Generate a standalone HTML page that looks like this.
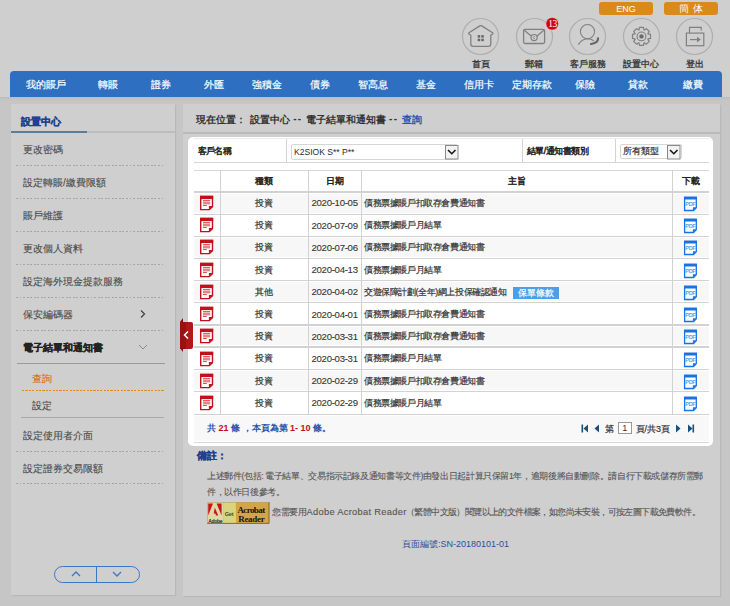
<!DOCTYPE html>
<html><head><meta charset="utf-8">
<style>
*{margin:0;padding:0;box-sizing:border-box}
html,body{width:730px;height:606px;overflow:hidden}
body{background:#c6c6c6;font-family:"Liberation Sans",sans-serif;position:relative;color:#444}
.a{position:absolute;white-space:nowrap}
.lang{top:2px;height:13px;width:54px;background:#d98a1a;border-radius:3px;color:#fff;font-size:9px;line-height:14px;text-align:center}
.ilab{top:57.5px;font-size:9px;-webkit-text-stroke-width:0.3px;color:#333;width:60px;text-align:center}
.ni{top:71px;height:26px;line-height:27px;color:#fff;-webkit-text-stroke-width:0.2px;font-size:10.2px;width:80px;text-align:center}
.si{left:23px;font-size:10px;color:#4a4a4a;-webkit-text-stroke-width:0.12px}
.dash{left:16px;width:148px;height:1px;background:repeating-linear-gradient(90deg,#a4a4a4 0 1.9px,transparent 1.9px 3.55px)}
.hl{left:194px;width:515px;height:1.5px;background:#dcdcdc}
.vl{width:1.5px;background:#dcdcdc}
.tt{font-size:8.8px;color:#333;-webkit-text-stroke-width:0.2px}
.th{font-size:8.8px;color:#222;-webkit-text-stroke-width:0.45px}
</style></head><body>
<div class="a" style="left:0;top:0;width:730px;height:97px;background:#cfcfcf"></div>
<div class="a lang" style="left:599px">ENG</div>
<div class="a lang" style="left:664px;letter-spacing:4px;text-indent:4px;font-size:9.5px;line-height:14px">簡体</div>
<svg class="a" style="left:461.0px;top:16.5px" width="39" height="39" viewBox="0 0 39 39"><circle cx="19.5" cy="19.5" r="18" fill="none" stroke="#aeaeae" stroke-width="1.2"/></svg>
<div class="a ilab" style="left:450.5px">首頁</div>
<svg class="a" style="left:514.5px;top:16.5px" width="39" height="39" viewBox="0 0 39 39"><circle cx="19.5" cy="19.5" r="18" fill="none" stroke="#aeaeae" stroke-width="1.2"/></svg>
<div class="a ilab" style="left:504px">郵箱</div>
<svg class="a" style="left:568.1px;top:16.5px" width="39" height="39" viewBox="0 0 39 39"><circle cx="19.5" cy="19.5" r="18" fill="none" stroke="#aeaeae" stroke-width="1.2"/></svg>
<div class="a ilab" style="left:557.6px">客戶服務</div>
<svg class="a" style="left:621.8px;top:16.5px" width="39" height="39" viewBox="0 0 39 39"><circle cx="19.5" cy="19.5" r="18" fill="none" stroke="#aeaeae" stroke-width="1.2"/></svg>
<div class="a ilab" style="left:611.3px">設置中心</div>
<svg class="a" style="left:675.3px;top:16.5px" width="39" height="39" viewBox="0 0 39 39"><circle cx="19.5" cy="19.5" r="18" fill="none" stroke="#aeaeae" stroke-width="1.2"/></svg>
<div class="a ilab" style="left:664.8px">登出</div>
<svg class="a" style="left:460px;top:16px" width="42" height="42" viewBox="460 16 42 42">
<path d="M470.8 35.3 L468.9 33.9 Q468.3 33.3 469 32.8 L479.8 25.9 Q480.8 25.3 481.8 25.9 L492.6 32.8 Q493.3 33.3 492.7 33.9 L490.8 35.3 V44 Q490.8 46.3 488.5 46.3 H473.1 Q470.8 46.3 470.8 44 Z" fill="none" stroke="#808080" stroke-width="1.3" stroke-linejoin="round"/>
<rect x="477.7" y="35.1" width="2.5" height="2.5" fill="#666"/><rect x="481.3" y="35.1" width="2.5" height="2.5" fill="#666"/>
<rect x="477.7" y="38.7" width="2.5" height="2.5" fill="#666"/><rect x="481.3" y="38.7" width="2.5" height="2.5" fill="#666"/>
</svg>
<svg class="a" style="left:513px;top:14px" width="46" height="44" viewBox="513 14 46 44">
<rect x="523.6" y="29.3" width="21" height="14.2" rx="1.5" fill="none" stroke="#808080" stroke-width="1.3"/>
<path d="M524 30 L531.5 36.3 M544.2 30 L536.7 36.3" fill="none" stroke="#808080" stroke-width="1.2"/>
<circle cx="534.1" cy="37.6" r="3.1" fill="none" stroke="#808080" stroke-width="1.2"/>
<path d="M535 36.6 Q533.4 36.2 533.3 37.7 Q533.5 39 535 38.6" fill="none" stroke="#808080" stroke-width="0.7"/>
<circle cx="552.2" cy="23.8" r="6.3" fill="#d20010" stroke="#d8e4e4" stroke-width="0.5"/>
<text x="552.4" y="27.2" font-size="9.6" text-anchor="middle" fill="#fff" font-family="Liberation Serif" letter-spacing="-0.6">13</text>
</svg>
<svg class="a" style="left:566px;top:16px" width="42" height="42" viewBox="566 16 42 42">
<circle cx="587.5" cy="31.6" r="7.1" fill="none" stroke="#808080" stroke-width="1.1"/>
<path d="M578.3 44.6 Q582 39 587.5 38.8 Q591.3 38.8 593.8 40.8" fill="none" stroke="#808080" stroke-width="1.1"/>
<path d="M598 38.3 Q598.8 42.5 591 44" fill="none" stroke="#666" stroke-width="2.2" stroke-linecap="round"/>
</svg>
<svg class="a" style="left:620px;top:16px" width="42" height="42" viewBox="620 16 42 42">
<path d="M639.03 29.85 L639.49 27.42 L643.51 27.42 L643.97 29.85 L644.39 30.02 L646.43 28.63 L649.27 31.47 L647.88 33.51 L648.05 33.93 L650.48 34.39 L650.48 38.41 L648.05 38.87 L647.88 39.29 L649.27 41.33 L646.43 44.17 L644.39 42.78 L643.97 42.95 L643.51 45.38 L639.49 45.38 L639.03 42.95 L638.61 42.78 L636.57 44.17 L633.73 41.33 L635.12 39.29 L634.95 38.87 L632.52 38.41 L632.52 34.39 L634.95 33.93 L635.12 33.51 L633.73 31.47 L636.57 28.63 L638.61 30.02Z" fill="none" stroke="#808080" stroke-width="1.2" stroke-linejoin="round"/>
<circle cx="641.5" cy="36.4" r="4.4" fill="none" stroke="#808080" stroke-width="1.1"/>
<circle cx="641.5" cy="36.4" r="2.2" fill="#6a6a6a"/>
</svg>
<svg class="a" style="left:673px;top:16px" width="42" height="42" viewBox="673 16 42 42">
<path d="M689.5 33 V27.3 H701.2 V30.5" fill="none" stroke="#808080" stroke-width="1.2"/>
<rect x="686.4" y="33.1" width="17.4" height="12.6" fill="none" stroke="#808080" stroke-width="1.2"/>
<path d="M690 39.6 H697.5" stroke="#808080" stroke-width="1.2"/>
<path d="M697 36.8 L700.8 39.6 L697 42.4Z" fill="#808080"/>
</svg>
<div class="a" style="left:10px;top:71px;width:712px;height:26px;background:#2e6fc2;border-radius:4px 4px 0 0"></div>
<div class="a ni" style="left:5.600000000000001px">我的賬戶</div>
<div class="a ni" style="left:68px">轉賬</div>
<div class="a ni" style="left:121px">證券</div>
<div class="a ni" style="left:173.6px">外匯</div>
<div class="a ni" style="left:226.8px">強積金</div>
<div class="a ni" style="left:280px">債券</div>
<div class="a ni" style="left:332.8px">智高息</div>
<div class="a ni" style="left:386px">基金</div>
<div class="a ni" style="left:438.9px">信用卡</div>
<div class="a ni" style="left:491.70000000000005px">定期存款</div>
<div class="a ni" style="left:544.5px">保險</div>
<div class="a ni" style="left:597.7px">貸款</div>
<div class="a ni" style="left:653px">繳費</div>
<div class="a" style="left:0;top:97px;width:730px;height:4px;background:linear-gradient(#bdbdbd,#c6c6c6)"></div>
<div class="a" style="left:11px;top:104px;width:164px;height:490.5px;background:#cfcfcf;box-shadow:1px 1px 1px rgba(0,0,0,0.07)"></div>
<div class="a" style="left:183px;top:104px;width:537px;height:491.5px;background:#cfcfcf;box-shadow:1px 1px 1px rgba(0,0,0,0.07)"></div>
<div class="a" style="left:11px;top:131.3px;width:164px;height:2px;background:#bdbdbd"></div>
<div class="a" style="left:11px;top:131.3px;width:76px;height:2px;background:#5b7d97"></div>
<div class="a" style="left:20.5px;top:114.5px;font-size:10.3px;font-weight:bold;-webkit-text-stroke-width:0.25px;color:#1f3f8f">設置中心</div>
<div class="a si" style="top:142.5px">更改密碼</div>
<div class="a dash" style="top:165px"></div>
<div class="a si" style="top:175.5px">設定轉賬/繳費限額</div>
<div class="a dash" style="top:198px"></div>
<div class="a si" style="top:208.5px">賬戶維護</div>
<div class="a dash" style="top:230.5px"></div>
<div class="a si" style="top:241.5px">更改個人資料</div>
<div class="a dash" style="top:263.5px"></div>
<div class="a si" style="top:274.5px">設定海外現金提款服務</div>
<div class="a dash" style="top:297px"></div>
<div class="a si" style="top:307.5px">保安編碼器</div>
<div class="a dash" style="top:329.5px"></div>
<div class="a si" style="top:341px;font-weight:bold;color:#222;-webkit-text-stroke-width:0.2px">電子結單和通知書</div>
<div class="a" style="left:16.5px;top:363px;width:148px;height:1px;background:#9a9a9a"></div>
<div class="a si" style="left:32px;top:372px;color:#d8690f">查詢</div>
<div class="a" style="left:21.5px;top:389.5px;width:142px;height:1.5px;background:repeating-linear-gradient(90deg,#de8a22 0 2.1px,transparent 2.1px 3.4px)"></div>
<div class="a si" style="left:32px;top:399.3px">設定</div>
<div class="a" style="left:20.5px;top:417px;width:143px;height:1px;background:#aaa"></div>
<div class="a si" style="top:428.6px">設定使用者介面</div>
<div class="a dash" style="top:450.6px"></div>
<div class="a si" style="top:461.6px">設定證券交易限額</div>
<div class="a dash" style="top:483.4px"></div>
<svg class="a" style="left:138px;top:308px" width="10" height="12" viewBox="0 0 10 12"><path d="M3 2.5 L6.5 6 L3 9.5" fill="none" stroke="#444" stroke-width="1.3"/></svg>
<svg class="a" style="left:137px;top:342px" width="12" height="10" viewBox="0 0 12 10"><path d="M2 3 L6 7 L10 3" fill="none" stroke="#888" stroke-width="1"/></svg>
<div class="a" style="left:53.5px;top:566px;width:86px;height:16.5px;border:1.2px solid #3b78c2;border-radius:9px"></div>
<div class="a" style="left:96px;top:566px;width:1.2px;height:16.5px;background:#3b78c2"></div>
<svg class="a" style="left:68px;top:569px" width="16" height="10" viewBox="0 0 16 10"><path d="M4 7 L8 3 L12 7" fill="none" stroke="#3b78c2" stroke-width="1.3"/></svg>
<svg class="a" style="left:109px;top:569px" width="16" height="10" viewBox="0 0 16 10"><path d="M4 3 L8 7 L12 3" fill="none" stroke="#3b78c2" stroke-width="1.3"/></svg>
<div class="a" style="left:183px;top:131.5px;width:537px;height:2px;background:#bababa"></div>
<div class="a" style="left:195.8px;top:112.6px;font-size:10px;font-weight:bold;color:#333">現在位置：</div>
<div class="a" style="left:249.5px;top:112.6px;font-size:10px;font-weight:bold;color:#333">設置中心</div>
<div class="a" style="left:293.2px;top:112.6px;font-size:10px;font-weight:bold;color:#333;letter-spacing:1.3px">--</div>
<div class="a" style="left:306.1px;top:112.6px;font-size:10px;font-weight:bold;color:#333">電子結單和通知書</div>
<div class="a" style="left:389.1px;top:112.6px;font-size:10px;font-weight:bold;color:#333;letter-spacing:1.3px">--</div>
<div class="a" style="left:402px;top:112.6px;font-size:10px;font-weight:bold;color:#1f55b5">查詢</div>
<div class="a" style="left:188px;top:136.5px;width:524.5px;height:309.5px;background:#fff;border-radius:5px"></div>
<div class="a hl" style="top:138px;height:1px;background:#ececec"></div>
<div class="a hl" style="top:162px;height:1px;background:#d6d6d6"></div>
<div class="a vl" style="left:286px;top:139px;height:23px;width:1px;background:#d4d4d4"></div>
<div class="a vl" style="left:522px;top:139px;height:23px;width:1px;background:#d4d4d4"></div>
<div class="a vl" style="left:615px;top:139px;height:23px;width:1px;background:#d4d4d4"></div>
<div class="a th" style="left:197.5px;top:145.5px;letter-spacing:-0.6px">客戶名稱</div>
<div class="a th" style="left:526.5px;top:145.5px;letter-spacing:-0.42px">結單/通知書類別</div>
<div class="a" style="left:290.7px;top:143.5px;width:167px;height:16.3px;border:1px solid #d6d6d6;border-radius:2px;background:#fff"></div>
<div class="a" style="left:294.2px;top:146.5px;font-size:9.3px;transform:scaleX(0.92);transform-origin:0 0;color:#2a2a2a">K2SIOK S** P**</div>
<svg class="a" style="left:444.5px;top:145px" width="14" height="15" viewBox="0 0 14 15"><rect x="0.5" y="0.5" width="12.5" height="13.5" fill="#f2f2f2" stroke="#8a8a8a" stroke-width="1"/><path d="M3 5 L6.8 8.8 L10.5 5" fill="none" stroke="#111" stroke-width="1.5"/></svg>
<div class="a" style="left:619.7px;top:143.7px;width:62px;height:15.8px;border:1px solid #d6d6d6;border-radius:2px;background:#fff"></div>
<div class="a" style="left:622.5px;top:145.8px;font-size:8.8px;color:#333;-webkit-text-stroke-width:0.2px">所有類型</div>
<svg class="a" style="left:667px;top:144.5px" width="14" height="15" viewBox="0 0 14 15"><rect x="0.5" y="0.5" width="12.5" height="13.5" fill="#f2f2f2" stroke="#8a8a8a" stroke-width="1"/><path d="M3 5 L6.8 8.8 L10.5 5" fill="none" stroke="#111" stroke-width="1.5"/></svg>
<div class="a" style="left:194px;top:193.70px;width:515px;height:19.00px;background:#f7f7f7"></div>
<div class="a" style="left:194px;top:238.00px;width:515px;height:18.80px;background:#f7f7f7"></div>
<div class="a" style="left:194px;top:282.20px;width:515px;height:19.00px;background:#f7f7f7"></div>
<div class="a" style="left:194px;top:326.60px;width:515px;height:18.90px;background:#f7f7f7"></div>
<div class="a" style="left:194px;top:370.80px;width:515px;height:19.00px;background:#f7f7f7"></div>
<div class="a" style="left:194px;top:415.9px;width:515px;height:25.5px;background:#f8f8f8"></div>
<div class="a hl" style="top:169.6px;height:1.4px;background:#d8d8d8"></div>
<div class="a hl" style="top:191.45px;height:1.3px;background:#d2d2d2"></div>
<div class="a hl" style="top:213.65px;height:1.3px;background:#d2d2d2"></div>
<div class="a hl" style="top:235.75px;height:1.3px;background:#d2d2d2"></div>
<div class="a hl" style="top:257.75px;height:1.3px;background:#d2d2d2"></div>
<div class="a hl" style="top:279.95px;height:1.3px;background:#d2d2d2"></div>
<div class="a hl" style="top:302.15px;height:1.3px;background:#d2d2d2"></div>
<div class="a hl" style="top:324.35px;height:1.3px;background:#d2d2d2"></div>
<div class="a hl" style="top:346.45px;height:1.3px;background:#d2d2d2"></div>
<div class="a hl" style="top:368.55px;height:1.3px;background:#d2d2d2"></div>
<div class="a hl" style="top:390.75px;height:1.3px;background:#d2d2d2"></div>
<div class="a hl" style="top:413.65px;height:1.3px;background:#d2d2d2"></div>
<div class="a hl" style="top:442.2px;height:1px;background:#d8d8d8"></div>
<div class="a vl" style="left:220.1px;top:170px;height:244px;width:1.3px;background:#d2d2d2"></div>
<div class="a vl" style="left:307.6px;top:170px;height:244px;width:1.3px;background:#d2d2d2"></div>
<div class="a vl" style="left:361.1px;top:170px;height:244px;width:1.3px;background:#d2d2d2"></div>
<div class="a vl" style="left:671.6px;top:170px;height:244px;width:1.3px;background:#d2d2d2"></div>
<div class="a th" style="left:220px;width:88px;text-align:center;top:175.5px">種類</div>
<div class="a th" style="left:308px;width:53px;text-align:center;top:175.5px">日期</div>
<div class="a th" style="left:362px;width:310px;text-align:center;top:175.5px">主旨</div>
<div class="a th" style="left:672px;width:37px;text-align:center;top:175.5px">下載</div>
<svg class="a" style="left:199px;top:195.00px" width="15" height="16" viewBox="0 0 15 16"><path d="M1.7 1.5 H13.5 V11.6 L10.4 14.6 H1.7 Z" fill="#fff" stroke="#c0121c" stroke-width="1.4"/><rect x="1" y="0.8" width="13.2" height="3.3" fill="#c0121c"/><path d="M4 5.6 H11.2 M4 7.2 H11.2 M4 8.8 H11.2 M4 10.5 H7.8" stroke="#d6474d" stroke-width="0.95"/><path d="M13.5 11.1 L9.9 11.1 L9.9 14.6 Z" fill="#c0121c"/></svg>
<svg class="a" style="left:683px;top:196.00px" width="15" height="16" viewBox="0 0 15 16"><path d="M1.6 1.3 H13.3 V11.8 L10.5 14.5 H1.6 Z" fill="#fff" stroke="#1a72e2" stroke-width="1.3"/><rect x="1" y="0.7" width="12.9" height="2.8" fill="#1a72e2"/><text x="7.3" y="9.6" font-size="5.6" font-weight="bold" text-anchor="middle" fill="#5c9ee8" font-family="Liberation Sans" letter-spacing="-0.4">PDF</text><path d="M13.3 11.2 L9.9 11.2 L9.9 14.5 Z" fill="#1a72e2"/></svg>
<div class="a tt" style="left:220px;width:88px;text-align:center;top:197.80px">投資</div>
<div class="a tt" style="left:311.5px;top:197.30px;font-size:9.6px;letter-spacing:-0.29px;-webkit-text-stroke-width:0.1px">2020-10-05</div>
<div class="a tt" style="left:364px;top:197.80px;letter-spacing:-0.4px">債務票據賬戶扣取存倉費通知書</div>
<svg class="a" style="left:199px;top:217.24px" width="15" height="16" viewBox="0 0 15 16"><path d="M1.7 1.5 H13.5 V11.6 L10.4 14.6 H1.7 Z" fill="#fff" stroke="#c0121c" stroke-width="1.4"/><rect x="1" y="0.8" width="13.2" height="3.3" fill="#c0121c"/><path d="M4 5.6 H11.2 M4 7.2 H11.2 M4 8.8 H11.2 M4 10.5 H7.8" stroke="#d6474d" stroke-width="0.95"/><path d="M13.5 11.1 L9.9 11.1 L9.9 14.6 Z" fill="#c0121c"/></svg>
<svg class="a" style="left:683px;top:218.24px" width="15" height="16" viewBox="0 0 15 16"><path d="M1.6 1.3 H13.3 V11.8 L10.5 14.5 H1.6 Z" fill="#fff" stroke="#1a72e2" stroke-width="1.3"/><rect x="1" y="0.7" width="12.9" height="2.8" fill="#1a72e2"/><text x="7.3" y="9.6" font-size="5.6" font-weight="bold" text-anchor="middle" fill="#5c9ee8" font-family="Liberation Sans" letter-spacing="-0.4">PDF</text><path d="M13.3 11.2 L9.9 11.2 L9.9 14.5 Z" fill="#1a72e2"/></svg>
<div class="a tt" style="left:220px;width:88px;text-align:center;top:220.04px">投資</div>
<div class="a tt" style="left:311.5px;top:219.54px;font-size:9.6px;letter-spacing:-0.29px;-webkit-text-stroke-width:0.1px">2020-07-09</div>
<div class="a tt" style="left:364px;top:220.04px;letter-spacing:-0.4px">債務票據賬戶月結單</div>
<svg class="a" style="left:199px;top:239.48px" width="15" height="16" viewBox="0 0 15 16"><path d="M1.7 1.5 H13.5 V11.6 L10.4 14.6 H1.7 Z" fill="#fff" stroke="#c0121c" stroke-width="1.4"/><rect x="1" y="0.8" width="13.2" height="3.3" fill="#c0121c"/><path d="M4 5.6 H11.2 M4 7.2 H11.2 M4 8.8 H11.2 M4 10.5 H7.8" stroke="#d6474d" stroke-width="0.95"/><path d="M13.5 11.1 L9.9 11.1 L9.9 14.6 Z" fill="#c0121c"/></svg>
<svg class="a" style="left:683px;top:240.48px" width="15" height="16" viewBox="0 0 15 16"><path d="M1.6 1.3 H13.3 V11.8 L10.5 14.5 H1.6 Z" fill="#fff" stroke="#1a72e2" stroke-width="1.3"/><rect x="1" y="0.7" width="12.9" height="2.8" fill="#1a72e2"/><text x="7.3" y="9.6" font-size="5.6" font-weight="bold" text-anchor="middle" fill="#5c9ee8" font-family="Liberation Sans" letter-spacing="-0.4">PDF</text><path d="M13.3 11.2 L9.9 11.2 L9.9 14.5 Z" fill="#1a72e2"/></svg>
<div class="a tt" style="left:220px;width:88px;text-align:center;top:242.28px">投資</div>
<div class="a tt" style="left:311.5px;top:241.78px;font-size:9.6px;letter-spacing:-0.29px;-webkit-text-stroke-width:0.1px">2020-07-06</div>
<div class="a tt" style="left:364px;top:242.28px;letter-spacing:-0.4px">債務票據賬戶扣取存倉費通知書</div>
<svg class="a" style="left:199px;top:261.72px" width="15" height="16" viewBox="0 0 15 16"><path d="M1.7 1.5 H13.5 V11.6 L10.4 14.6 H1.7 Z" fill="#fff" stroke="#c0121c" stroke-width="1.4"/><rect x="1" y="0.8" width="13.2" height="3.3" fill="#c0121c"/><path d="M4 5.6 H11.2 M4 7.2 H11.2 M4 8.8 H11.2 M4 10.5 H7.8" stroke="#d6474d" stroke-width="0.95"/><path d="M13.5 11.1 L9.9 11.1 L9.9 14.6 Z" fill="#c0121c"/></svg>
<svg class="a" style="left:683px;top:262.72px" width="15" height="16" viewBox="0 0 15 16"><path d="M1.6 1.3 H13.3 V11.8 L10.5 14.5 H1.6 Z" fill="#fff" stroke="#1a72e2" stroke-width="1.3"/><rect x="1" y="0.7" width="12.9" height="2.8" fill="#1a72e2"/><text x="7.3" y="9.6" font-size="5.6" font-weight="bold" text-anchor="middle" fill="#5c9ee8" font-family="Liberation Sans" letter-spacing="-0.4">PDF</text><path d="M13.3 11.2 L9.9 11.2 L9.9 14.5 Z" fill="#1a72e2"/></svg>
<div class="a tt" style="left:220px;width:88px;text-align:center;top:264.52px">投資</div>
<div class="a tt" style="left:311.5px;top:264.02px;font-size:9.6px;letter-spacing:-0.29px;-webkit-text-stroke-width:0.1px">2020-04-13</div>
<div class="a tt" style="left:364px;top:264.52px;letter-spacing:-0.4px">債務票據賬戶月結單</div>
<svg class="a" style="left:199px;top:283.96px" width="15" height="16" viewBox="0 0 15 16"><path d="M1.7 1.5 H13.5 V11.6 L10.4 14.6 H1.7 Z" fill="#fff" stroke="#c0121c" stroke-width="1.4"/><rect x="1" y="0.8" width="13.2" height="3.3" fill="#c0121c"/><path d="M4 5.6 H11.2 M4 7.2 H11.2 M4 8.8 H11.2 M4 10.5 H7.8" stroke="#d6474d" stroke-width="0.95"/><path d="M13.5 11.1 L9.9 11.1 L9.9 14.6 Z" fill="#c0121c"/></svg>
<svg class="a" style="left:683px;top:284.96px" width="15" height="16" viewBox="0 0 15 16"><path d="M1.6 1.3 H13.3 V11.8 L10.5 14.5 H1.6 Z" fill="#fff" stroke="#1a72e2" stroke-width="1.3"/><rect x="1" y="0.7" width="12.9" height="2.8" fill="#1a72e2"/><text x="7.3" y="9.6" font-size="5.6" font-weight="bold" text-anchor="middle" fill="#5c9ee8" font-family="Liberation Sans" letter-spacing="-0.4">PDF</text><path d="M13.3 11.2 L9.9 11.2 L9.9 14.5 Z" fill="#1a72e2"/></svg>
<div class="a tt" style="left:220px;width:88px;text-align:center;top:286.76px">其他</div>
<div class="a tt" style="left:311.5px;top:286.26px;font-size:9.6px;letter-spacing:-0.29px;-webkit-text-stroke-width:0.1px">2020-04-02</div>
<div class="a tt" style="left:364px;top:286.76px;letter-spacing:-0.4px">交遊保障計劃(全年)網上投保確認通知</div>
<div class="a" style="left:513px;top:287.16px;width:46px;height:12.3px;background:#4a9fe6;color:#fff;font-size:9px;line-height:12.5px;text-align:center;-webkit-text-stroke-width:0.2px">保單條款</div>
<svg class="a" style="left:199px;top:306.20px" width="15" height="16" viewBox="0 0 15 16"><path d="M1.7 1.5 H13.5 V11.6 L10.4 14.6 H1.7 Z" fill="#fff" stroke="#c0121c" stroke-width="1.4"/><rect x="1" y="0.8" width="13.2" height="3.3" fill="#c0121c"/><path d="M4 5.6 H11.2 M4 7.2 H11.2 M4 8.8 H11.2 M4 10.5 H7.8" stroke="#d6474d" stroke-width="0.95"/><path d="M13.5 11.1 L9.9 11.1 L9.9 14.6 Z" fill="#c0121c"/></svg>
<svg class="a" style="left:683px;top:307.20px" width="15" height="16" viewBox="0 0 15 16"><path d="M1.6 1.3 H13.3 V11.8 L10.5 14.5 H1.6 Z" fill="#fff" stroke="#1a72e2" stroke-width="1.3"/><rect x="1" y="0.7" width="12.9" height="2.8" fill="#1a72e2"/><text x="7.3" y="9.6" font-size="5.6" font-weight="bold" text-anchor="middle" fill="#5c9ee8" font-family="Liberation Sans" letter-spacing="-0.4">PDF</text><path d="M13.3 11.2 L9.9 11.2 L9.9 14.5 Z" fill="#1a72e2"/></svg>
<div class="a tt" style="left:220px;width:88px;text-align:center;top:309.00px">投資</div>
<div class="a tt" style="left:311.5px;top:308.50px;font-size:9.6px;letter-spacing:-0.29px;-webkit-text-stroke-width:0.1px">2020-04-01</div>
<div class="a tt" style="left:364px;top:309.00px;letter-spacing:-0.4px">債務票據賬戶扣取存倉費通知書</div>
<svg class="a" style="left:199px;top:328.44px" width="15" height="16" viewBox="0 0 15 16"><path d="M1.7 1.5 H13.5 V11.6 L10.4 14.6 H1.7 Z" fill="#fff" stroke="#c0121c" stroke-width="1.4"/><rect x="1" y="0.8" width="13.2" height="3.3" fill="#c0121c"/><path d="M4 5.6 H11.2 M4 7.2 H11.2 M4 8.8 H11.2 M4 10.5 H7.8" stroke="#d6474d" stroke-width="0.95"/><path d="M13.5 11.1 L9.9 11.1 L9.9 14.6 Z" fill="#c0121c"/></svg>
<svg class="a" style="left:683px;top:329.44px" width="15" height="16" viewBox="0 0 15 16"><path d="M1.6 1.3 H13.3 V11.8 L10.5 14.5 H1.6 Z" fill="#fff" stroke="#1a72e2" stroke-width="1.3"/><rect x="1" y="0.7" width="12.9" height="2.8" fill="#1a72e2"/><text x="7.3" y="9.6" font-size="5.6" font-weight="bold" text-anchor="middle" fill="#5c9ee8" font-family="Liberation Sans" letter-spacing="-0.4">PDF</text><path d="M13.3 11.2 L9.9 11.2 L9.9 14.5 Z" fill="#1a72e2"/></svg>
<div class="a tt" style="left:220px;width:88px;text-align:center;top:331.24px">投資</div>
<div class="a tt" style="left:311.5px;top:330.74px;font-size:9.6px;letter-spacing:-0.29px;-webkit-text-stroke-width:0.1px">2020-03-31</div>
<div class="a tt" style="left:364px;top:331.24px;letter-spacing:-0.4px">債務票據賬戶扣取存倉費通知書</div>
<svg class="a" style="left:199px;top:350.68px" width="15" height="16" viewBox="0 0 15 16"><path d="M1.7 1.5 H13.5 V11.6 L10.4 14.6 H1.7 Z" fill="#fff" stroke="#c0121c" stroke-width="1.4"/><rect x="1" y="0.8" width="13.2" height="3.3" fill="#c0121c"/><path d="M4 5.6 H11.2 M4 7.2 H11.2 M4 8.8 H11.2 M4 10.5 H7.8" stroke="#d6474d" stroke-width="0.95"/><path d="M13.5 11.1 L9.9 11.1 L9.9 14.6 Z" fill="#c0121c"/></svg>
<svg class="a" style="left:683px;top:351.68px" width="15" height="16" viewBox="0 0 15 16"><path d="M1.6 1.3 H13.3 V11.8 L10.5 14.5 H1.6 Z" fill="#fff" stroke="#1a72e2" stroke-width="1.3"/><rect x="1" y="0.7" width="12.9" height="2.8" fill="#1a72e2"/><text x="7.3" y="9.6" font-size="5.6" font-weight="bold" text-anchor="middle" fill="#5c9ee8" font-family="Liberation Sans" letter-spacing="-0.4">PDF</text><path d="M13.3 11.2 L9.9 11.2 L9.9 14.5 Z" fill="#1a72e2"/></svg>
<div class="a tt" style="left:220px;width:88px;text-align:center;top:353.48px">投資</div>
<div class="a tt" style="left:311.5px;top:352.98px;font-size:9.6px;letter-spacing:-0.29px;-webkit-text-stroke-width:0.1px">2020-03-31</div>
<div class="a tt" style="left:364px;top:353.48px;letter-spacing:-0.4px">債務票據賬戶月結單</div>
<svg class="a" style="left:199px;top:372.92px" width="15" height="16" viewBox="0 0 15 16"><path d="M1.7 1.5 H13.5 V11.6 L10.4 14.6 H1.7 Z" fill="#fff" stroke="#c0121c" stroke-width="1.4"/><rect x="1" y="0.8" width="13.2" height="3.3" fill="#c0121c"/><path d="M4 5.6 H11.2 M4 7.2 H11.2 M4 8.8 H11.2 M4 10.5 H7.8" stroke="#d6474d" stroke-width="0.95"/><path d="M13.5 11.1 L9.9 11.1 L9.9 14.6 Z" fill="#c0121c"/></svg>
<svg class="a" style="left:683px;top:373.92px" width="15" height="16" viewBox="0 0 15 16"><path d="M1.6 1.3 H13.3 V11.8 L10.5 14.5 H1.6 Z" fill="#fff" stroke="#1a72e2" stroke-width="1.3"/><rect x="1" y="0.7" width="12.9" height="2.8" fill="#1a72e2"/><text x="7.3" y="9.6" font-size="5.6" font-weight="bold" text-anchor="middle" fill="#5c9ee8" font-family="Liberation Sans" letter-spacing="-0.4">PDF</text><path d="M13.3 11.2 L9.9 11.2 L9.9 14.5 Z" fill="#1a72e2"/></svg>
<div class="a tt" style="left:220px;width:88px;text-align:center;top:375.72px">投資</div>
<div class="a tt" style="left:311.5px;top:375.22px;font-size:9.6px;letter-spacing:-0.29px;-webkit-text-stroke-width:0.1px">2020-02-29</div>
<div class="a tt" style="left:364px;top:375.72px;letter-spacing:-0.4px">債務票據賬戶扣取存倉費通知書</div>
<svg class="a" style="left:199px;top:395.16px" width="15" height="16" viewBox="0 0 15 16"><path d="M1.7 1.5 H13.5 V11.6 L10.4 14.6 H1.7 Z" fill="#fff" stroke="#c0121c" stroke-width="1.4"/><rect x="1" y="0.8" width="13.2" height="3.3" fill="#c0121c"/><path d="M4 5.6 H11.2 M4 7.2 H11.2 M4 8.8 H11.2 M4 10.5 H7.8" stroke="#d6474d" stroke-width="0.95"/><path d="M13.5 11.1 L9.9 11.1 L9.9 14.6 Z" fill="#c0121c"/></svg>
<svg class="a" style="left:683px;top:396.16px" width="15" height="16" viewBox="0 0 15 16"><path d="M1.6 1.3 H13.3 V11.8 L10.5 14.5 H1.6 Z" fill="#fff" stroke="#1a72e2" stroke-width="1.3"/><rect x="1" y="0.7" width="12.9" height="2.8" fill="#1a72e2"/><text x="7.3" y="9.6" font-size="5.6" font-weight="bold" text-anchor="middle" fill="#5c9ee8" font-family="Liberation Sans" letter-spacing="-0.4">PDF</text><path d="M13.3 11.2 L9.9 11.2 L9.9 14.5 Z" fill="#1a72e2"/></svg>
<div class="a tt" style="left:220px;width:88px;text-align:center;top:397.96px">投資</div>
<div class="a tt" style="left:311.5px;top:397.46px;font-size:9.6px;letter-spacing:-0.29px;-webkit-text-stroke-width:0.1px">2020-02-29</div>
<div class="a tt" style="left:364px;top:397.96px;letter-spacing:-0.4px">債務票據賬戶月結單</div>
<div class="a" style="left:207px;top:421.5px;font-size:9px;font-weight:bold;color:#2a52a8">共 <span style="color:#c0101a">21</span> 條 ，本頁為第 <span style="color:#c0101a">1- 10</span> 條。</div>
<svg class="a" style="left:580px;top:422px" width="116" height="13" viewBox="0 0 116 13">
<rect x="1.5" y="2.5" width="1.6" height="8" fill="#1b4f78"/><path d="M8 2.5 L3.5 6.5 L8 10.5Z" fill="#1b4f78"/>
<path d="M19 2.5 L14.5 6.5 L19 10.5Z" fill="#1b4f78"/>
<path d="M96 2.5 L100.5 6.5 L96 10.5Z" fill="#1b4f78"/>
<path d="M108 2.5 L112.5 6.5 L108 10.5Z" fill="#1b4f78"/><rect x="112.5" y="2.5" width="1.6" height="8" fill="#1b4f78"/>
</svg>
<div class="a" style="left:605px;top:422.5px;font-size:9px;color:#333;-webkit-text-stroke-width:0.2px">第</div>
<div class="a" style="left:618px;top:421.5px;width:13.5px;height:12px;border:1px solid #999;background:#fff;font-size:9px;color:#333;text-align:center;line-height:10px">1</div>
<div class="a" style="left:635.5px;top:422.5px;font-size:9px;color:#333;-webkit-text-stroke-width:0.2px">頁/共3頁</div>
<div class="a" style="left:197px;top:448.5px;font-size:10px;font-weight:bold;-webkit-text-stroke-width:0.25px;color:#1f3f8f">備註：</div>
<div class="a" style="left:207px;top:471px;font-size:8.6px;letter-spacing:-0.38px;color:#555;-webkit-text-stroke-width:0.1px">上述郵件(包括: 電子結單、交易指示記錄及通知書等文件)由發出日起計算只保留1年，逾期後將自動刪除。請自行下載或儲存所需郵</div>
<div class="a" style="left:207px;top:487px;font-size:8.6px;letter-spacing:-0.38px;color:#555;-webkit-text-stroke-width:0.1px">件，以作日後參考。</div>
<div class="a" style="left:272px;top:507px;font-size:8.6px;letter-spacing:-0.3px;color:#555;-webkit-text-stroke-width:0.12px">您需要用</div>
<div class="a" style="left:306.5px;top:506.6px;font-size:9.3px;letter-spacing:0.3px;color:#555;-webkit-text-stroke-width:0.12px">Adobe Acrobat Reader</div>
<div class="a" style="left:406px;top:507px;font-size:8.6px;letter-spacing:-0.6px;color:#555;-webkit-text-stroke-width:0.12px">（繁體中文版）閱覽以上的文件檔案，如您尚未安裝，可按左圖下載免費軟件。</div>
<div class="a" style="left:402px;top:538px;font-size:9px;color:#2a4f9a">頁面編號:SN-20180101-01</div>
<svg class="a" style="left:207.4px;top:501.8px" width="62.4" height="21.8" viewBox="0 0 62.4 21.8">
<rect x="0" y="0" width="62.4" height="21.8" fill="#d4a548"/>
<rect x="0" y="0" width="16.5" height="21.8" fill="#dedaa8"/>
<rect x="16.5" y="0" width="11" height="21.8" fill="#d8d482"/>
<rect x="27.3" y="0" width="1.4" height="21.8" fill="#e6e266"/>
<path d="M1.2 1.5 H6 L1.2 13.5Z M9.6 1.5 H14.6 V13.5Z M7.8 5.6 L11.2 13.5 H9 L8.3 11.6 H6.7Z" fill="#c8141c"/>
<text x="8.2" y="20.6" font-size="5" text-anchor="middle" fill="#222" font-family="Liberation Sans" font-weight="bold" letter-spacing="-0.3">Adobe</text>
<text x="22" y="14" font-size="5.5" text-anchor="middle" fill="#4a4a2a" font-family="Liberation Sans" font-weight="bold" letter-spacing="-0.2">Get</text>
<text x="44" y="11.3" font-size="9" text-anchor="middle" fill="#141410" font-family="Liberation Serif" font-weight="bold" letter-spacing="-0.6">Acrobat</text>
<text x="44.3" y="19.8" font-size="9" text-anchor="middle" fill="#141410" font-family="Liberation Serif" font-weight="bold" letter-spacing="-0.3">Reader</text>
<path d="M62 0 V21.4 H0" fill="none" stroke="#7a6030" stroke-width="0.9"/>
<path d="M0.4 21.4 V0.4 H62" fill="none" stroke="#b8a070" stroke-width="0.7"/>
</svg>
<div class="a" style="left:180px;top:321.5px;width:12.5px;height:27px;background:#b01818;border-radius:0 2px 2px 0"></div>
<div class="a" style="left:180px;top:321.5px;width:6px;height:27px;background:#9c1010"></div>
<svg class="a" style="left:179px;top:318px" width="14" height="34" viewBox="0 0 14 34"><path d="M1 4 L4 0 L4 4Z M1 30 L4 34 L4 30Z" fill="#801010"/><path d="M9 13.5 L5.5 17 L9 20.5" fill="none" stroke="#fff" stroke-width="1.5"/></svg>
</body></html>
